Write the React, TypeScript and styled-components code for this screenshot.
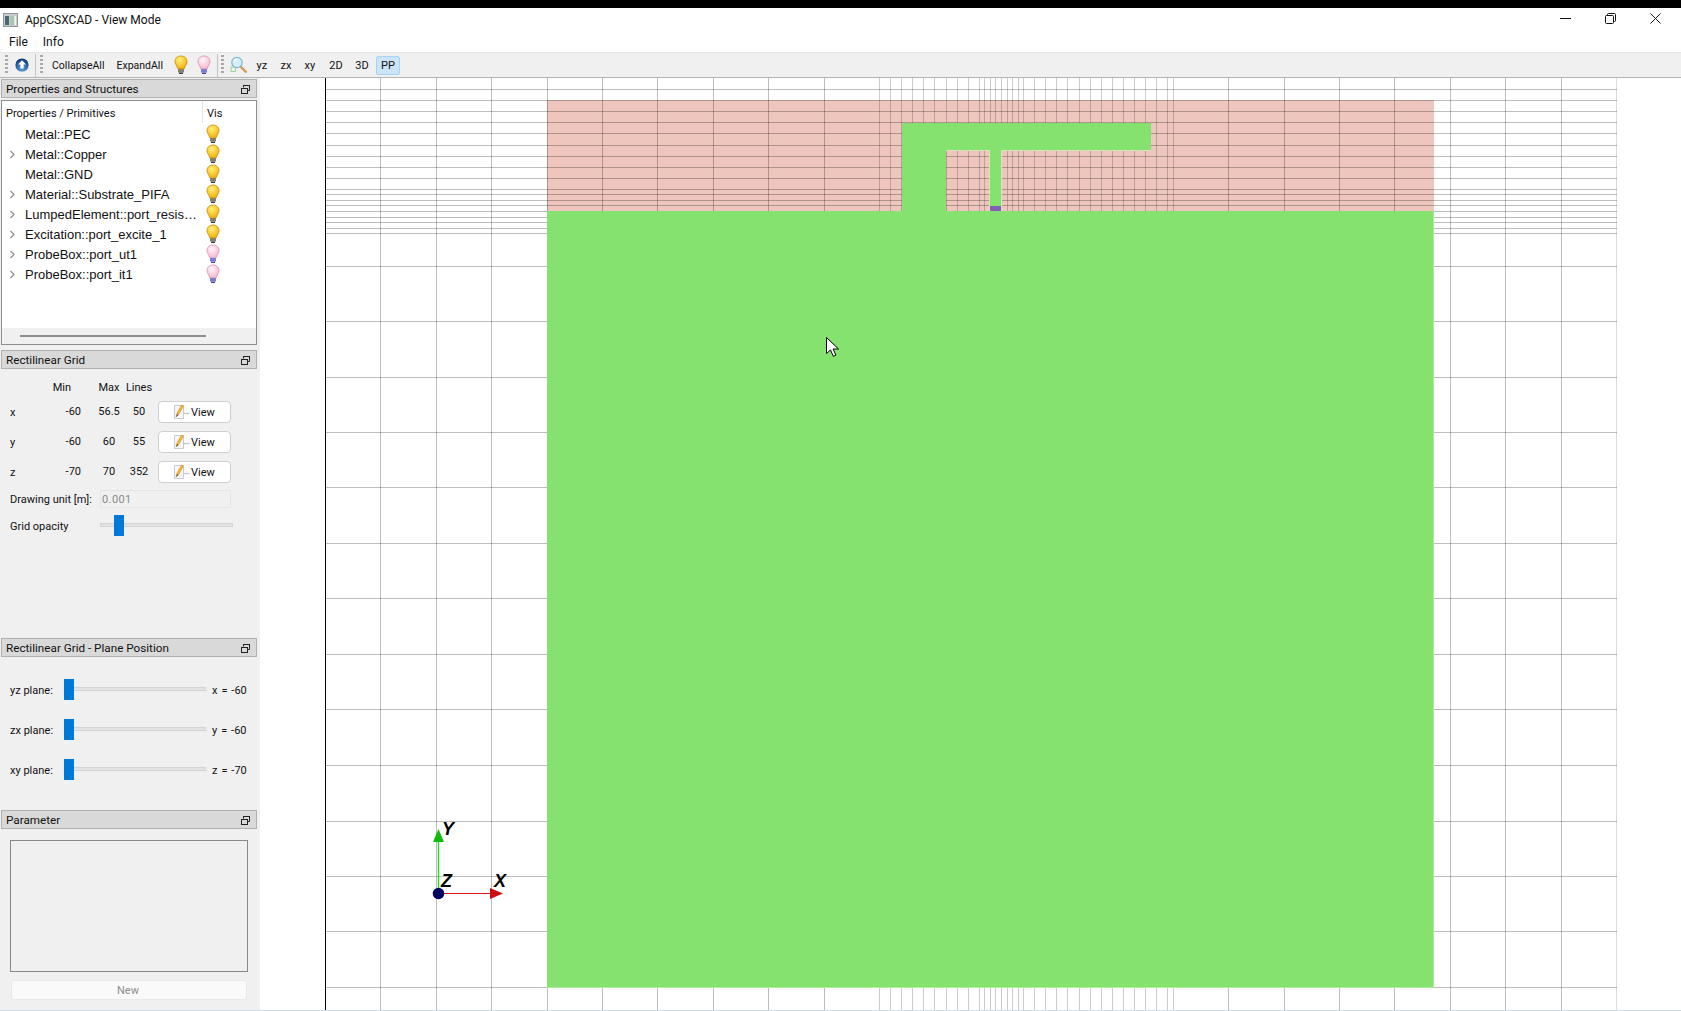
import React from 'react';
import styled, { createGlobalStyle } from 'styled-components';

const uiFont = 'Roboto, "Open Sans", sans-serif';

const GlobalStyle = createGlobalStyle`
  html, body {
    margin: 0;
    padding: 0;
    background: #fff;
    overflow: hidden;
  }
  * {
    box-sizing: border-box;
  }
`;

const Page = styled.div`
  width: 1681px;
  height: 1011px;
  display: flex;
  flex-direction: column;
  overflow: hidden;
  font-family: ${uiFont};
  font-size: 11px;
  color: #111;
  background: #fff;
  border-bottom: 1px solid #cfdbee;
`;

const BlackStrip = styled.div`
  height: 8px;
  flex: none;
  background: #000;
`;

const TitleBar = styled.div`
  height: 23px;
  flex: none;
  display: flex;
  align-items: center;
  padding-left: 3px;
  gap: 7px;
  font-size: 12px;
`;

const WindowControls = styled.div`
  margin-left: auto;
  margin-bottom: 2px;
  padding-right: 3px;
  display: flex;
  align-items: center;
`;

const WindowButton = styled.div`
  width: 45px;
  height: 22px;
  display: flex;
  align-items: center;
  justify-content: center;
`;

const MenuBar = styled.div`
  height: 21px;
  flex: none;
  display: flex;
  align-items: center;
  padding-left: 9px;
  gap: 15px;
  font-size: 12px;
`;

const Toolbar = styled.div`
  height: 26px;
  flex: none;
  display: flex;
  align-items: center;
  padding-left: 5px;
  background: #f0f0f0;
  border-top: 1px solid #e6e6e6;
  border-bottom: 1px solid #b4b4b4;
`;

const Grip = styled.span<{ $ml?: number }>`
  width: 3px;
  height: 20px;
  flex: none;
  margin-left: ${(p) => p.$ml ?? 0}px;
  background: repeating-linear-gradient(to bottom, #a8a8a8 0 2px, transparent 2px 4px);
`;

const ToolSeparator = styled.span<{ $ml: number }>`
  width: 1px;
  height: 23px;
  flex: none;
  margin-left: ${(p) => p.$ml}px;
  background: #c4c4c4;
`;

const ToolIcon = styled.span<{ $ml: number; $w?: number }>`
  width: ${(p) => p.$w ?? 16}px;
  height: 20px;
  flex: none;
  margin-left: ${(p) => p.$ml}px;
  display: flex;
  align-items: center;
  justify-content: center;
`;

const ToolText = styled.span<{ $ml?: number }>`
  padding: 0 6px;
  margin-left: ${(p) => p.$ml ?? 0}px;
  flex: none;
  white-space: nowrap;
  font-size: 10.5px;
`;

const ToolToggle = styled.span<{ $ml?: number; $active?: boolean }>`
  width: 24px;
  height: 19px;
  flex: none;
  margin-left: ${(p) => p.$ml ?? 0}px;
  display: flex;
  align-items: center;
  justify-content: center;
  border-radius: 2px;
  background: ${(p) => (p.$active ? '#cce4f7' : 'transparent')};
  border: 1px solid ${(p) => (p.$active ? '#a6d2f5' : 'transparent')};
`;

const Main = styled.div`
  flex: 1;
  min-height: 0;
  display: flex;
`;

const Dock = styled.aside`
  width: 260px;
  flex: none;
  padding: 1px 0 0 1px;
  background: #f0f0f0;
  display: flex;
  flex-direction: column;
`;

const DockTitle = styled.div`
  width: 256px;
  height: 19px;
  flex: none;
  display: flex;
  align-items: center;
  justify-content: space-between;
  padding: 1px 6px 0 4px;
  background: #d9d9d9;
  border: 1px solid #b0b0b0;
  font-size: 11.7px;
`;

const DockBody = styled.div<{ $height: number }>`
  height: ${(p) => p.$height}px;
  flex: none;
`;

const TreeBox = styled.div`
  width: 256px;
  height: 245px;
  margin-top: 2px;
  background: #fff;
  border: 1px solid #8a8f94;
  display: flex;
  flex-direction: column;
`;

const TreeHeader = styled.div`
  height: 22px;
  flex: none;
  display: flex;
  align-items: center;
  font-size: 11px;
`;

const TreeHeaderName = styled.span`
  width: 201px;
  height: 100%;
  padding: 2px 0 0 4px;
  display: flex;
  align-items: center;
  border-right: 1px solid #e4e4e4;
`;

const TreeHeaderVis = styled.span`
  padding: 2px 0 0 4px;
`;

const TreeRows = styled.div`
  flex: 1;
  padding-top: 1px;
`;

const TreeRow = styled.div`
  height: 20px;
  display: flex;
  align-items: center;
  font-family: "Liberation Sans", Arial, sans-serif;
  font-size: 13px;
`;

const Expander = styled.span`
  width: 23px;
  flex: none;
  display: flex;
  align-items: center;
  padding-left: 7px;
`;

const TreeName = styled.span`
  width: 180px;
  flex: none;
  white-space: nowrap;
  overflow: hidden;
`;

const TreeVis = styled.span`
  width: 16px;
  height: 19px;
  margin-top: -1px;
  display: flex;
  align-items: center;
  justify-content: center;
`;

const TreeScroll = styled.div`
  height: 16px;
  flex: none;
  background: #f0f0f0;
  display: flex;
  align-items: center;
  padding-left: 18px;
`;

const TreeThumb = styled.div`
  width: 186px;
  height: 2px;
  background: #8c8c8c;
`;

const GridTable = styled.div`
  display: grid;
  grid-template-columns: 30px 53px 32px 28px 78px;
  grid-template-rows: 18px repeat(3, 30px);
  padding: 10px 0 0 9px;
`;

const HeaderCell = styled.span<{ $pad?: number; $right?: boolean }>`
  line-height: 18px;
  white-space: nowrap;
  text-align: ${(p) => (p.$right ? 'right' : 'center')};
  padding-right: ${(p) => p.$pad ?? 0}px;
`;

const AxisCell = styled.span`
  align-self: center;
  padding-top: 1px;
`;

const ValueCell = styled.span<{ $right?: boolean }>`
  align-self: center;
  white-space: nowrap;
  text-align: ${(p) => (p.$right ? 'right' : 'center')};
  padding-right: ${(p) => (p.$right ? 12 : 0)}px;
  padding-bottom: 1px;
`;

const ViewButton = styled.div`
  width: 73px;
  height: 22px;
  margin-left: 5px;
  align-self: center;
  display: flex;
  align-items: center;
  padding-left: 12px;
  background: #fff;
  border: 1px solid #cfcfcf;
  border-radius: 4px;
`;

const UnitRow = styled.div`
  height: 18px;
  margin-top: 3px;
  padding-left: 9px;
  display: flex;
  align-items: center;
`;

const UnitLabel = styled.span`
  width: 90px;
  flex: none;
  padding-top: 1px;
  white-space: nowrap;
`;

const UnitInput = styled.div`
  width: 131px;
  height: 18px;
  padding-left: 1px;
  display: flex;
  align-items: center;
  color: #8a8a8a;
  letter-spacing: 0.4px;
  background: #f0f0f0;
  border: 1px solid #e6e6e6;
`;

const OpacityRow = styled.div`
  height: 22px;
  margin-top: 7px;
  padding-left: 9px;
  display: flex;
  align-items: center;
`;

const SliderBox = styled.div<{ $width: number }>`
  position: relative;
  width: ${(p) => p.$width}px;
  height: 22px;
  flex: none;
`;

const SliderTrack = styled.div`
  position: absolute;
  left: 0;
  right: 0;
  top: 8px;
  height: 4px;
  background: #e3e3e3;
  border: 1px solid #d4d4d4;
`;

const SliderHandle = styled.div<{ $left: number }>`
  position: absolute;
  left: ${(p) => p.$left}px;
  top: 0;
  width: 10px;
  height: 21px;
  background: #0078d7;
`;

const PlaneList = styled.div`
  padding: 22px 0 0 9px;
  display: flex;
  flex-direction: column;
  gap: 18px;
`;

const PlaneRow = styled.div`
  height: 22px;
  display: flex;
  align-items: center;
`;

const PlaneLabel = styled.span`
  width: 54px;
  flex: none;
  padding-top: 1px;
  white-space: nowrap;
`;

const PlaneValue = styled.span`
  margin-left: 6px;
  padding-top: 1px;
  white-space: nowrap;
  word-spacing: 1.2px;
`;

const ParamBox = styled.div`
  width: 238px;
  height: 132px;
  margin: 11px 0 0 9px;
  border: 1px solid #85898e;
  background: #f0f0f0;
`;

const NewButton = styled.div`
  width: 236px;
  height: 20px;
  margin: 8px 0 0 10px;
  padding-right: 2px;
  display: flex;
  align-items: center;
  justify-content: center;
  color: #8c8c8c;
  background: #fafafa;
  border: 1px solid #e9e9e9;
  border-radius: 3px;
`;

const Viewport = styled.div`
  position: relative;
  flex: 1;
  min-width: 0;
  background: #fff;
`;

const ViewSvg = styled.svg`
  display: block;
`;

const CursorArrow = styled.svg`
  position: absolute;
  left: 566px;
  top: 259px;
`;

const gridX = [
  380, 436, 491, 547, 602, 657, 713, 768, 824, 879, 890, 901, 912, 923, 934, 946, 957, 968, 979,
  984, 990, 995, 1001, 1007, 1012, 1018, 1023, 1034, 1045, 1056, 1067, 1079, 1090, 1101, 1112,
  1123, 1134, 1145, 1156, 1167, 1173, 1228, 1284, 1339, 1394, 1450, 1505, 1561, 1616,
];

const gridY = [
  89, 100, 111, 122, 133, 145, 156, 167, 178, 189, 194, 200, 205, 211, 217, 222, 228, 233, 266,
  321, 377, 432, 487, 543, 598, 654, 709, 765, 821, 876, 931, 987,
];

const lineColor = (x: number) => {
  if (x === 1616) return 'rgba(0,0,0,0.14)';
  // the dense lines round the antenna read a little lighter
  return x >= 879 && x <= 1173 ? 'rgba(0,0,0,0.2)' : 'rgba(0,0,0,0.26)';
};

const Bulb: React.FC<{ on?: boolean; id: string }> = ({ on, id }) => (
  <svg width="16" height="20" viewBox="0 0 16 20">
    <defs>
      <radialGradient id={id} cx="0.4" cy="0.3" r="0.8">
        <stop offset="0" stopColor={on ? '#fff27a' : '#fff6fa'} />
        <stop offset="1" stopColor={on ? '#f2a600' : '#f6aecb'} />
      </radialGradient>
    </defs>
    <path
      d="M8 1C4.4 1 2 3.4 2 6.4c0 2.9 2 4.2 3 7.6h6c1-3.4 3-4.7 3-7.6C14 3.4 11.6 1 8 1z"
      fill={`url(#${id})`}
      stroke={on ? '#c98a00' : '#d58fab'}
      strokeWidth="0.8"
    />
    <rect x="5" y="14" width="6" height="3.6" rx="0.6" fill={on ? '#85806f' : '#7c7cd6'} />
    <rect x="6" y="17.6" width="4" height="1.4" fill={on ? '#3f3f3f' : '#4a4aa0'} />
  </svg>
);

const Chevron: React.FC = () => (
  <svg width="7" height="9" viewBox="0 0 7 9">
    <path d="M1.5 1l3.5 3.5L1.5 8" fill="none" stroke="#8a8a8a" strokeWidth="1.1" />
  </svg>
);

const FloatIcon: React.FC = () => (
  <svg width="9" height="9" viewBox="0 0 9 9">
    <path d="M2.5 2.5V.5h6v5h-2" fill="none" stroke="#222" />
    <rect x="0.5" y="3.5" width="6" height="5" fill="none" stroke="#222" />
    <path d="M2 .5h7M0 3.5h7" stroke="#222" />
  </svg>
);

const NoteIcon: React.FC = () => (
  <svg width="20" height="16" viewBox="0 0 20 16">
    <path d="M3.5 1.5h9v13h-9z" fill="#f6f6fa" stroke="#c9c9d6" />
    <path d="M12.5 9.5h6" stroke="#c8c8c8" strokeWidth="1.4" />
    <path d="M5 13l1-4 4.5-8 2 1-4.5 8z" fill="#f2b632" stroke="#d28c10" strokeWidth="0.5" />
    <path d="M5 13l1-3 1.6 1z" fill="#6b5a3a" />
  </svg>
);

const AppIcon: React.FC = () => (
  <svg width="15" height="14" viewBox="0 0 15 14">
    <rect x="0.5" y="0.5" width="14" height="13" fill="#c6cdd2" stroke="#8f979c" />
    <rect x="2" y="3" width="4" height="9" fill="#4a6670" />
    <rect x="7" y="3" width="4" height="9" fill="#a9c6b5" />
    <rect x="11.5" y="3" width="1.5" height="9" fill="#f2f4f4" />
  </svg>
);

const UpdateIcon: React.FC = () => (
  <svg width="16" height="16" viewBox="0 0 16 16">
    <defs>
      <radialGradient id="globeFill" cx="0.5" cy="0.75" r="0.7">
        <stop offset="0" stopColor="#5ea8e6" />
        <stop offset="1" stopColor="#0f3578" />
      </radialGradient>
    </defs>
    <circle cx="8" cy="8" r="6.6" fill="url(#globeFill)" />
    <path d="M8 3.2L12 7.6H9.6V11.6H6.4V7.6H4z" fill="#fff" />
  </svg>
);

const ZoomIcon: React.FC = () => (
  <svg width="18" height="18" viewBox="0 0 18 18">
    <rect x="1" y="11" width="4.5" height="4.5" fill="none" stroke="#9bd49b" />
    <path d="M10.5 10.5l6 6" stroke="#d29a4e" strokeWidth="2.4" />
    <circle cx="7" cy="6.5" r="5.2" fill="#d5eefa" stroke="#7fb4d6" strokeWidth="1.2" />
    <path d="M4 6a3.2 3.2 0 0 1 3-3" fill="none" stroke="#fff" strokeWidth="1.2" />
  </svg>
);

const AxisLabel = styled.text`
  font-family: "Liberation Sans", Arial, sans-serif;
  font-size: 18px;
  font-weight: 700;
  font-style: italic;
  fill: #000;
`;

const ModelView: React.FC = () => (
  <ViewSvg width="1421" height="932" viewBox="260 78 1421 932">
    <rect x="547" y="100" width="887" height="111" fill="#eec6be" />
    {gridX.map((x) => (
      <line key={x} x1={x + 0.5} x2={x + 0.5} y1="78" y2="1010" stroke={lineColor(x)} />
    ))}
    {gridY.map((y) => (
      <line key={y} x1="326" x2="1617" y1={y + 0.5} y2={y + 0.5} stroke="rgba(0,0,0,0.26)" />
    ))}
    <rect x="325" y="78" width="1" height="932" fill="#000" />

    <rect x="547" y="211" width="887" height="777" fill="#a9ee98" />
    <rect x="547" y="211" width="886" height="776" fill="#85e26e" />
    <rect x="946" y="150" width="205" height="1" fill="#d6e4bc" />
    <rect x="989" y="150" width="13" height="61" fill="#d6e4bc" />
    <rect x="902" y="123" width="44" height="88" fill="#85e26e" />
    <rect x="902" y="123" width="249" height="27" fill="#85e26e" />
    <rect x="990" y="150" width="11" height="56" fill="#85e26e" />
    <rect x="990" y="206" width="11" height="5" fill="#8060b0" />

    <line x1="438.5" x2="438.5" y1="842" y2="889" stroke="#22dd22" strokeWidth="1.4" />
    <path d="M438.5 829l5.5 13h-11z" fill="#11bb11" />
    <line x1="440" x2="491" y1="893.5" y2="893.5" stroke="#d81818" strokeWidth="1.2" />
    <path d="M503 893.5l-13-5.5v11z" fill="#cc0d0d" />
    <circle cx="438.5" cy="893.5" r="5.8" fill="#000060" />
    <AxisLabel x="442" y="835">Y</AxisLabel>
    <AxisLabel x="441" y="887">Z</AxisLabel>
    <AxisLabel x="494" y="887">X</AxisLabel>
  </ViewSvg>
);

const properties = [
  { name: 'Metal::PEC', expand: false, on: true },
  { name: 'Metal::Copper', expand: true, on: true },
  { name: 'Metal::GND', expand: false, on: true },
  { name: 'Material::Substrate_PIFA', expand: true, on: true },
  { name: 'LumpedElement::port_resis…', expand: true, on: true },
  { name: 'Excitation::port_excite_1', expand: true, on: true },
  { name: 'ProbeBox::port_ut1', expand: true, on: false },
  { name: 'ProbeBox::port_it1', expand: true, on: false },
];

const gridRows = [
  { axis: 'x', min: '-60', max: '56.5', lines: '50' },
  { axis: 'y', min: '-60', max: '60', lines: '55' },
  { axis: 'z', min: '-70', max: '70', lines: '352' },
];

const planes = [
  { label: 'yz plane:', value: 'x = -60' },
  { label: 'zx plane:', value: 'y = -60' },
  { label: 'xy plane:', value: 'z = -70' },
];

const DockHeading: React.FC<{ title: string }> = ({ title }) => (
  <DockTitle>
    <span>{title}</span>
    <FloatIcon />
  </DockTitle>
);

export default function App() {
  return (
    <Page>
      <GlobalStyle />
      <BlackStrip />
      <TitleBar>
        <AppIcon />
        <span>AppCSXCAD - View Mode</span>
        <WindowControls>
          <WindowButton>
            <svg width="11" height="11" viewBox="0 0 11 11">
              <path d="M0 5.5h11" stroke="#111" />
            </svg>
          </WindowButton>
          <WindowButton>
            <svg width="11" height="11" viewBox="0 0 11 11">
              <rect x="0.5" y="2.5" width="8" height="8" rx="1" fill="none" stroke="#111" />
              <path d="M2.5 2.5v-1a1 1 0 0 1 1-1h6a1 1 0 0 1 1 1v6a1 1 0 0 1-1 1h-1" fill="none" stroke="#111" />
            </svg>
          </WindowButton>
          <WindowButton>
            <svg width="11" height="11" viewBox="0 0 11 11">
              <path d="M.5.5l10 10M10.5.5l-10 10" stroke="#111" />
            </svg>
          </WindowButton>
        </WindowControls>
      </TitleBar>
      <MenuBar>
        <span>File</span>
        <span>Info</span>
      </MenuBar>
      <Toolbar>
        <Grip />
        <ToolIcon $ml={6}>
          <UpdateIcon />
        </ToolIcon>
        <ToolSeparator $ml={5} />
        <Grip $ml={4} />
        <ToolText $ml={3}>CollapseAll</ToolText>
        <ToolText>ExpandAll</ToolText>
        <ToolIcon $ml={4}>
          <Bulb on id="tbOn" />
        </ToolIcon>
        <ToolIcon $ml={7}>
          <Bulb id="tbOff" />
        </ToolIcon>
        <ToolSeparator $ml={5} />
        <Grip $ml={3} />
        <ToolIcon $ml={6} $w={18}>
          <ZoomIcon />
        </ToolIcon>
        <ToolToggle $ml={2}>yz</ToolToggle>
        <ToolToggle>zx</ToolToggle>
        <ToolToggle>xy</ToolToggle>
        <ToolToggle $ml={2}>2D</ToolToggle>
        <ToolToggle $ml={2}>3D</ToolToggle>
        <ToolToggle $ml={2} $active>
          PP
        </ToolToggle>
      </Toolbar>
      <Main>
        <Dock>
          <DockHeading title="Properties and Structures" />
          <DockBody $height={252}>
            <TreeBox>
              <TreeHeader>
                <TreeHeaderName>Properties / Primitives</TreeHeaderName>
                <TreeHeaderVis>Vis</TreeHeaderVis>
              </TreeHeader>
              <TreeRows>
                {properties.map((item, i) => (
                  <TreeRow key={item.name}>
                    <Expander>{item.expand && <Chevron />}</Expander>
                    <TreeName>{item.name}</TreeName>
                    <TreeVis>
                      <Bulb on={item.on} id={`vis${i}`} />
                    </TreeVis>
                  </TreeRow>
                ))}
              </TreeRows>
              <TreeScroll>
                <TreeThumb />
              </TreeScroll>
            </TreeBox>
          </DockBody>
          <DockHeading title="Rectilinear Grid" />
          <DockBody $height={269}>
            <GridTable>
              <span />
              <HeaderCell $right $pad={22}>
                Min
              </HeaderCell>
              <HeaderCell>Max</HeaderCell>
              <HeaderCell>Lines</HeaderCell>
              <span />
              {gridRows.map((row) => (
                <React.Fragment key={row.axis}>
                  <AxisCell>{row.axis}</AxisCell>
                  <ValueCell $right>{row.min}</ValueCell>
                  <ValueCell>{row.max}</ValueCell>
                  <ValueCell>{row.lines}</ValueCell>
                  <ViewButton>
                    <NoteIcon />
                    <span>View</span>
                  </ViewButton>
                </React.Fragment>
              ))}
            </GridTable>
            <UnitRow>
              <UnitLabel>Drawing unit [m]:</UnitLabel>
              <UnitInput>0.001</UnitInput>
            </UnitRow>
            <OpacityRow>
              <UnitLabel>Grid opacity</UnitLabel>
              <SliderBox $width={133}>
                <SliderTrack />
                <SliderHandle $left={14} />
              </SliderBox>
            </OpacityRow>
          </DockBody>
          <DockHeading title="Rectilinear Grid - Plane Position" />
          <DockBody $height={153}>
            <PlaneList>
              {planes.map((plane) => (
                <PlaneRow key={plane.label}>
                  <PlaneLabel>{plane.label}</PlaneLabel>
                  <SliderBox $width={142}>
                    <SliderTrack />
                    <SliderHandle $left={0} />
                  </SliderBox>
                  <PlaneValue>{plane.value}</PlaneValue>
                </PlaneRow>
              ))}
            </PlaneList>
          </DockBody>
          <DockHeading title="Parameter" />
          <DockBody $height={181}>
            <ParamBox />
            <NewButton>New</NewButton>
          </DockBody>
        </Dock>
        <Viewport>
          <ModelView />
          <CursorArrow width="14" height="20" viewBox="0 0 14 20">
            <path d="M.5.5v16l4-3.6 2.8 6.4 2.6-1.1-2.8-6.2h5.4z" fill="#fff" stroke="#000" />
          </CursorArrow>
        </Viewport>
      </Main>
    </Page>
  );
}
